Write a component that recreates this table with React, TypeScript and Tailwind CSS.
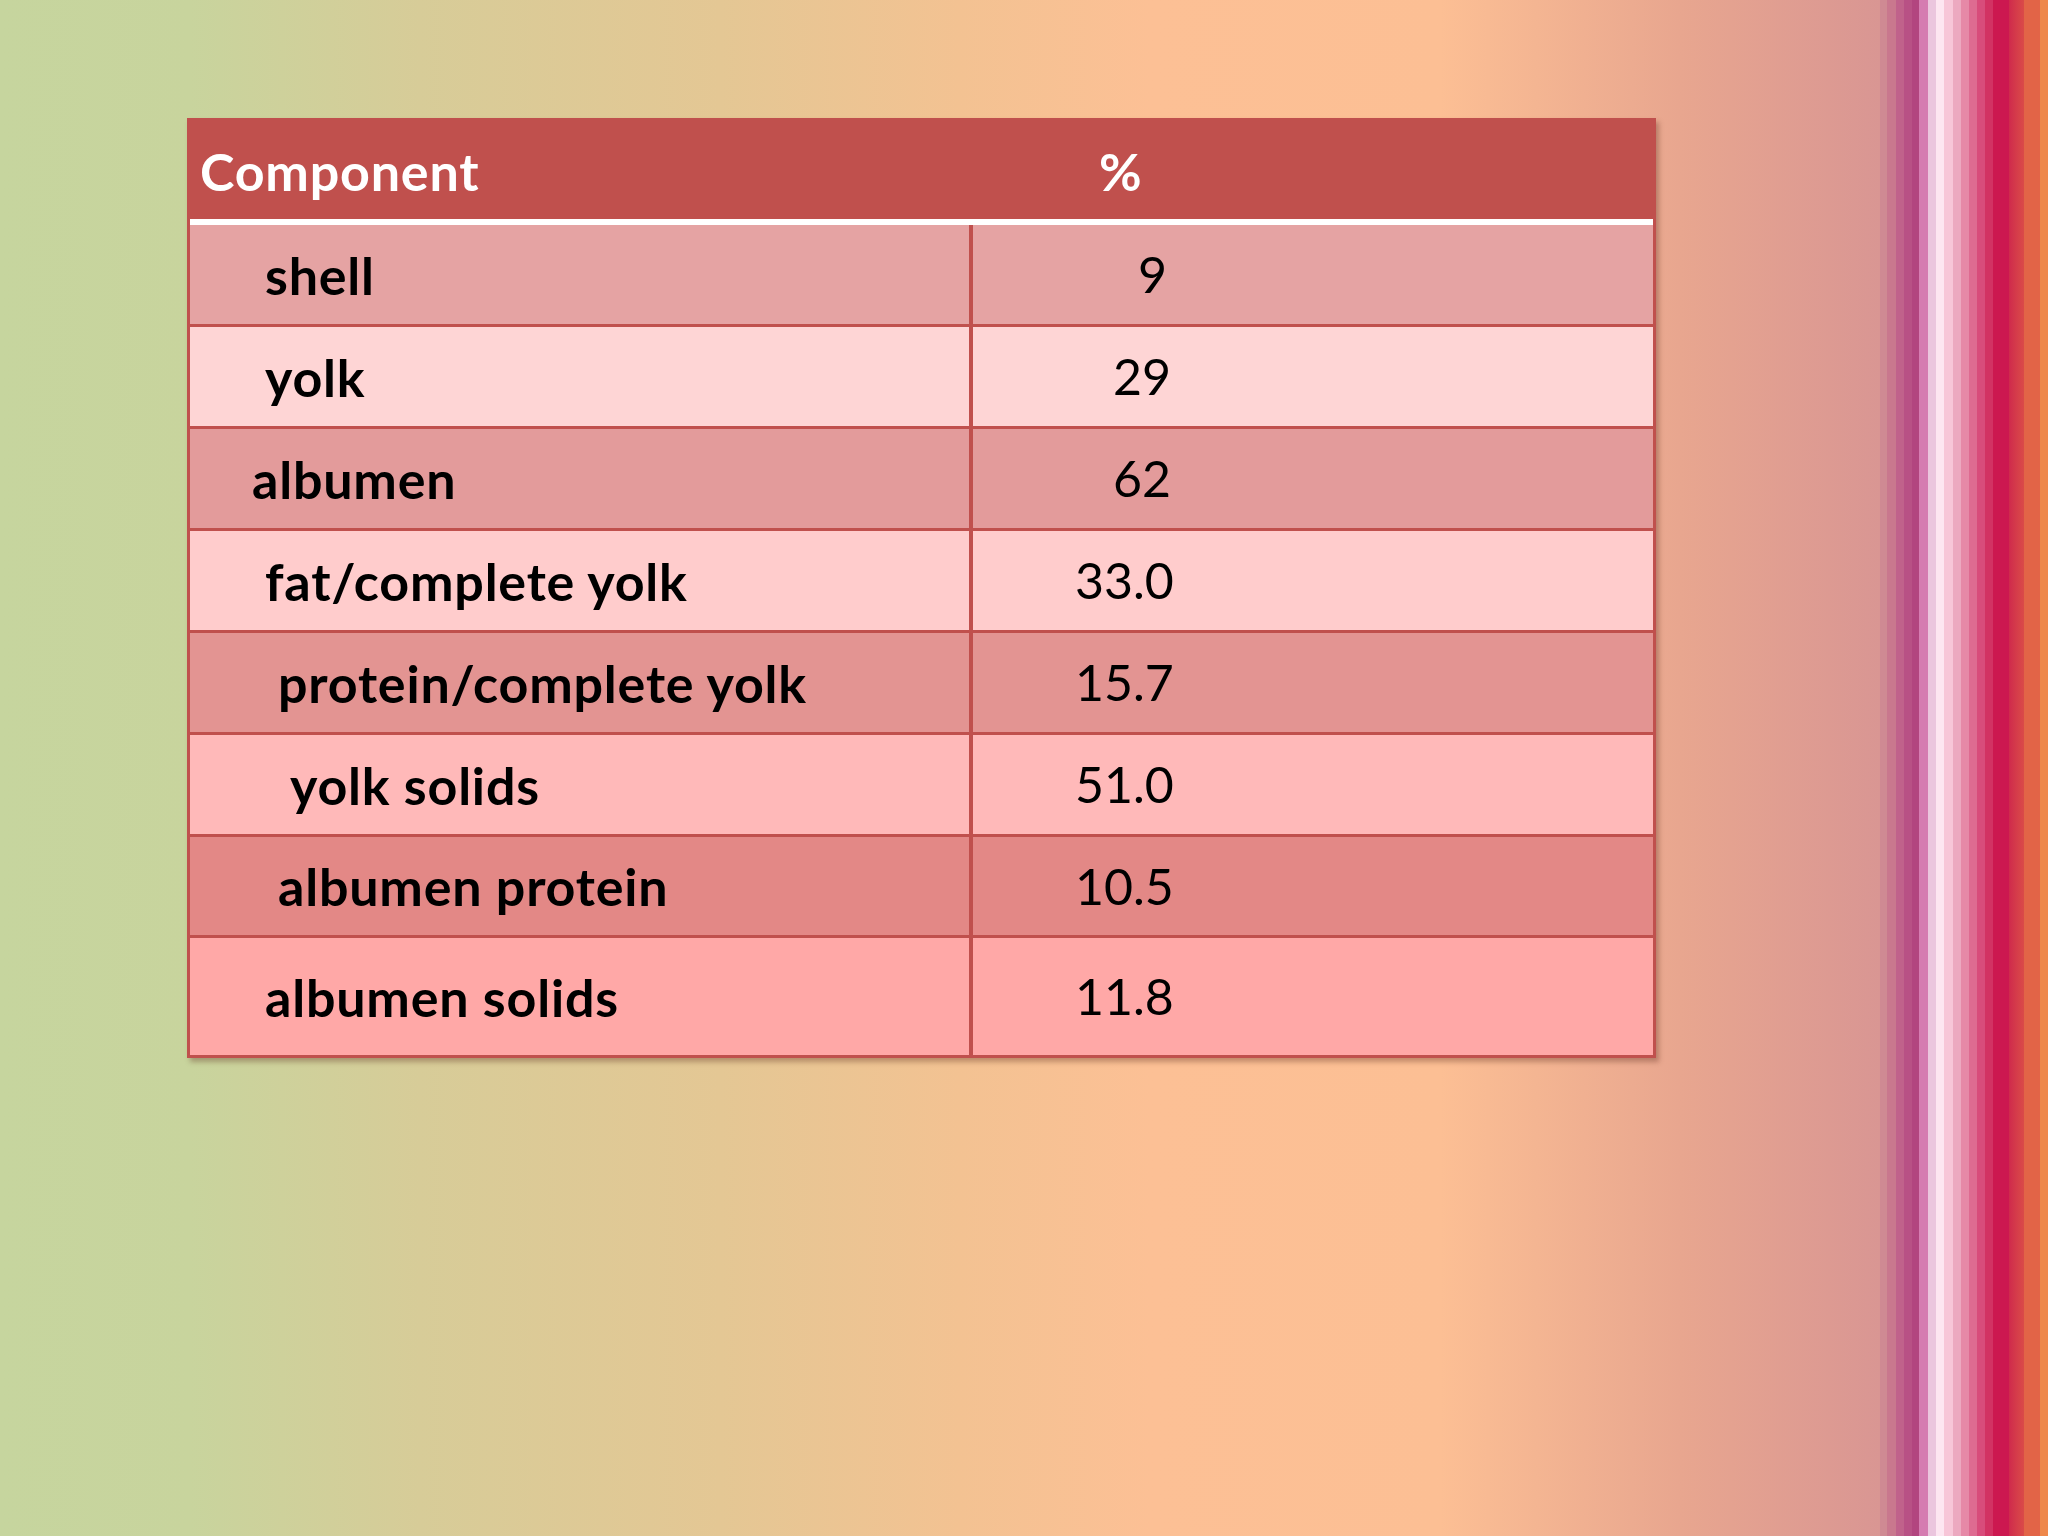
const stripes = [
  { w: 'w-[7px]', c: 'bg-[#cf8a93]' },
  { w: 'w-[9px]', c: 'bg-[#c9788e]' },
  { w: 'w-[8px]', c: 'bg-[#c0628b]' },
  { w: 'w-[8px]', c: 'bg-[#b85185]' },
  { w: 'w-[7px]', c: 'bg-[#b2457f]' },
  { w: 'w-[9px]', c: 'bg-[#d57cb1]' },
  { w: 'w-[8px]', c: 'bg-[#ebc6de]' },
  { w: 'w-[8px]', c: 'bg-[#fde6f1]' },
  { w: 'w-[9px]', c: 'bg-[#f7c6d8]' },
  { w: 'w-[8px]', c: 'bg-[#eca9c0]' },
  { w: 'w-[8px]', c: 'bg-[#e689a7]' },
  { w: 'w-[8px]', c: 'bg-[#de6b91]' },
  { w: 'w-[8px]', c: 'bg-[#d84c7b]' },
  { w: 'w-[8px]', c: 'bg-[#d23263]' },
  { w: 'w-[16px]', c: 'bg-[#cc1850]' },
  { w: 'w-[15px]', c: 'bg-gradient-to-r from-[#cf2a4c] to-[#da4a48]' },
  { w: 'w-[16px]', c: 'bg-[#e26447]' },
  { w: 'w-[8px]', c: 'bg-[#ee884b]' },
];

// row heights include the 3px bottom border (border-box)
const rows = [
  { name: 'shell', value: '9', bg: 'bg-[#e5a3a3]', pl: 'pl-[75px]', vl: 'pl-[165px]', h: 'h-[102px]' },
  { name: 'yolk', value: '29', bg: 'bg-[#fed5d5]', pl: 'pl-[75px]', vl: 'pl-[140px]', h: 'h-[102px]' },
  { name: 'albumen', value: '62', bg: 'bg-[#e39b9b]', pl: 'pl-[62px]', vl: 'pl-[140px]', h: 'h-[102px]' },
  { name: 'fat/complete yolk', value: '33.0', bg: 'bg-[#ffcccc]', pl: 'pl-[75px]', vl: 'pl-[102px]', h: 'h-[102px]' },
  { name: 'protein/complete yolk', value: '15.7', bg: 'bg-[#e39492]', pl: 'pl-[88px]', vl: 'pl-[102px]', h: 'h-[102px]' },
  { name: 'yolk solids', value: '51.0', bg: 'bg-[#ffb9b9]', pl: 'pl-[100px]', vl: 'pl-[102px]', h: 'h-[102px]' },
  { name: 'albumen protein', value: '10.5', bg: 'bg-[#e38886]', pl: 'pl-[88px]', vl: 'pl-[102px]', h: 'h-[101px]' },
  { name: 'albumen solids', value: '11.8', bg: 'bg-[#ffa8a7]', pl: 'pl-[75px]', vl: 'pl-[102px]', h: 'h-[117px]' },
];

export default function App() {
  return (
    <div className="flex h-[1536px] w-full overflow-hidden font-['Lato','Open_Sans',sans-serif]">
      {/* slide background */}
      <main className="flex-1 bg-[linear-gradient(to_right,#c6d59e_0px,#c8d49d_190px,#d7cc98_420px,#e4c794_720px,#f3c292_960px,#fcc095_1150px,#fcbf94_1440px,#e8a68f_1680px,#d99693_1880px)] pl-[187px] pt-[118px]">
        <div className="w-[1469px] shadow-[3px_4px_5px_rgba(90,40,30,0.35)]">
          <div className="flex h-[101px] items-center bg-[#c0504d] pt-[5px] text-[52px] font-bold tracking-[0.8px] text-white">
            <div className="w-[786px] pl-[13px]">Component</div>
            <div className="pl-[126px]">%</div>
          </div>
          <div className="h-[6px] border-x-[3px] border-[#c0504d] bg-white" />
          <div className="border-x-[3px] border-b-[3px] border-[#c0504d]">
            {rows.map((r, i) => (
              <div
                key={r.name}
                className={`flex ${r.h} ${r.bg} ${i < rows.length - 1 ? 'border-b-[3px] border-[#c0504d]' : ''} text-black`}
              >
                <div className={`flex w-[783px] items-center border-r-4 border-[#c0504d] text-[52px] font-bold tracking-[0.8px] ${r.pl}`}>
                  {r.name}
                </div>
                <div className={`flex flex-1 items-center text-[50px] ${r.vl}`}>{r.value}</div>
              </div>
            ))}
          </div>
        </div>
      </main>
      <aside className="flex w-[168px] shrink-0">
        {stripes.map((s, i) => (
          <div key={i} className={`h-full ${s.w} ${s.c}`} />
        ))}
      </aside>
    </div>
  );
}
